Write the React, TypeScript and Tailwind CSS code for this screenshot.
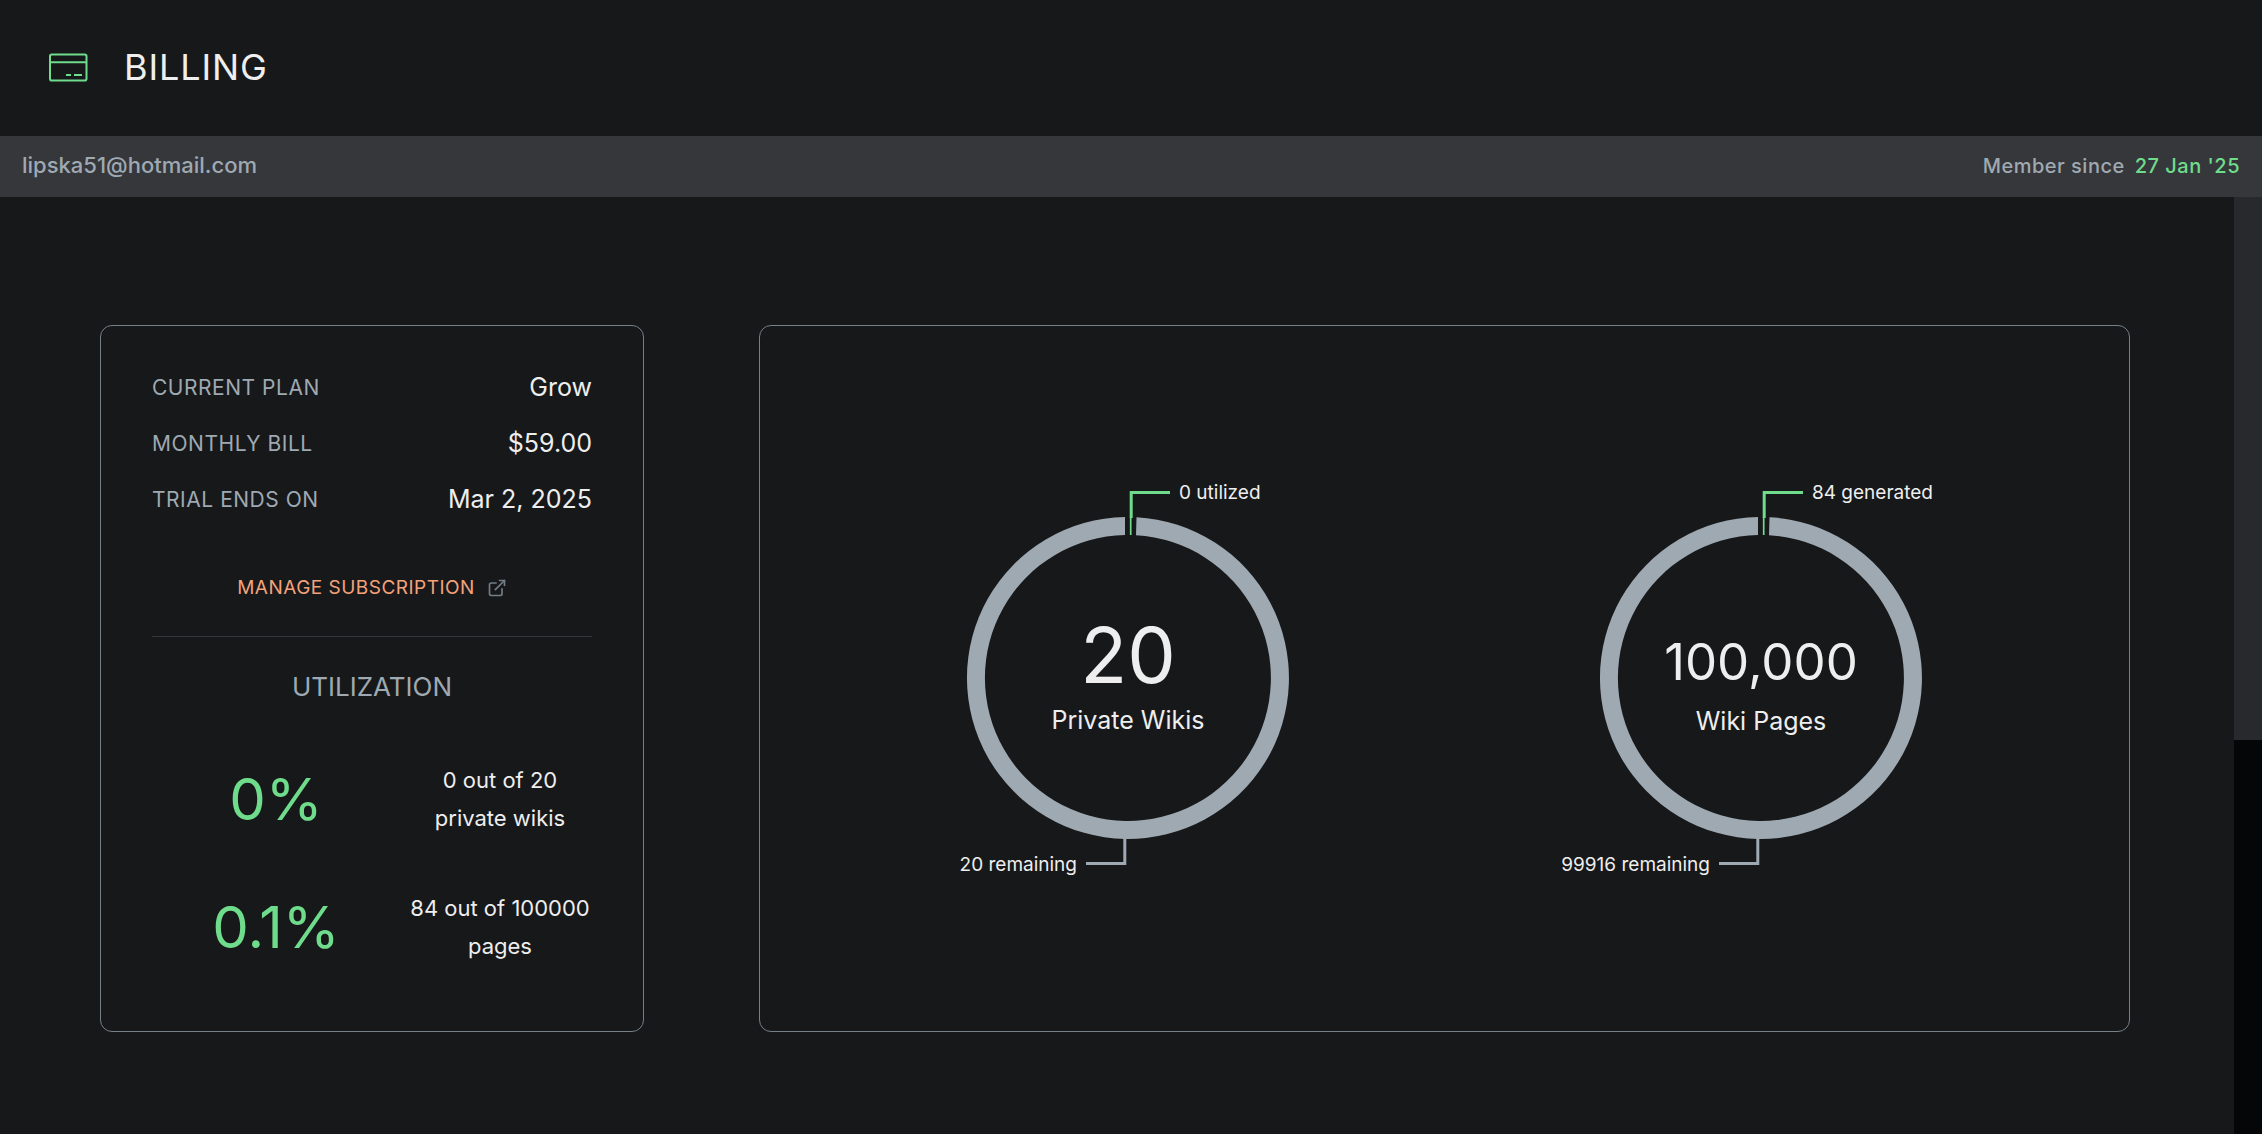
import { ExternalLink } from 'lucide-react';

const planDetails = [
  { label: 'Current plan', value: 'Grow' },
  { label: 'Monthly bill', value: '$59.00' },
  { label: 'Trial ends on', value: 'Mar 2, 2025' },
];

const utilization = [
  { percent: '0%', amount: '0 out of 20', unit: 'private wikis' },
  { percent: '0.1%', amount: '84 out of 100000', unit: 'pages' },
];

type UsageRingProps = {
  total: string;
  label: string;
  used: string;
  remaining: string;
  large?: boolean;
};

function CardIcon() {
  return (
    <svg
      viewBox="0 0 40 30"
      className="w-10 h-[30px] text-[#6fdc8c]"
      fill="none"
      stroke="currentColor"
      strokeWidth="2"
      aria-hidden="true"
    >
      <rect x="2" y="2.5" width="36.5" height="26" rx="1.8" />
      <path d="M2 10.2h36.5" />
      <path d="M18 23h5M26 23h8" />
    </svg>
  );
}

function UsageRing({ total, label, used, remaining, large = false }: UsageRingProps) {
  return (
    <div className="flex flex-1 justify-center">
      <svg
        viewBox="-210 -209 420 420"
        className="w-[420px] h-[420px] overflow-visible"
        role="img"
        aria-label={`${total} ${label}`}
      >
        <path
          d="M8.5 -160.8A161 161 0 1 1 -3 -161V-143A143 143 0 1 0 8 -142.8Z"
          fill="#9fa9b2"
        />
        <path d="M2.7 -161V-143" stroke="#6fdc8c" strokeWidth="1.7" />
        <path d="M3.2 -160V-185.5H42" fill="none" stroke="#6fdc8c" strokeWidth="3" />
        <path d="M-3.2 160V185.5H-42" fill="none" stroke="#9fa9b2" strokeWidth="3" />
        <g className="fill-[#eeeeee]">
          <text x="51" y="-179" className="text-[19px]">{used}</text>
          <text x="-51" y="193" textAnchor="end" className="text-[19px]">{remaining}</text>
          <text
            x="0"
            y={large ? 5 : 2}
            textAnchor="middle"
            className={large ? 'text-[77px]' : 'text-[51px]'}
          >
            {total}
          </text>
          <text x="0" y={large ? 51 : 52} textAnchor="middle" className="text-[25px]">{label}</text>
        </g>
      </svg>
    </div>
  );
}

export default function App() {
  return (
    <div className="flex flex-col h-screen bg-[#17181a] text-[#eeeeee] font-['Inter',sans-serif]">
      <header className="flex items-center gap-9 h-[136px] shrink-0 px-12 pb-0.5">
        <CardIcon />
        <h1 className="text-[36px] tracking-wide">BILLING</h1>
      </header>

      <div className="flex items-center justify-between h-[61px] shrink-0 px-[22px] pb-0.5 bg-[#36373b] text-[#9fa9b2] font-medium">
        <span className="text-[22px]">lipska51@hotmail.com</span>
        <p className="flex gap-[10px] text-[20px] tracking-wide">
          <span>Member since</span>
          <span className="text-[#6fdc8c]">27 Jan '25</span>
        </p>
      </div>

      <div className="flex flex-1 min-h-0">
        <main className="flex-1 pt-32 pl-[100px] pr-[104px]">
          <div className="flex gap-[115px]">
            <section className="w-[544px] shrink-0 rounded-xl border border-[#768087] px-[51px] pt-[34px] pb-[66px]">
              <dl>
                {planDetails.map((item) => (
                  <div key={item.label} className="flex items-center justify-between h-14">
                    <dt className="text-[21px] tracking-wide uppercase text-[#9fa9b2]">{item.label}</dt>
                    <dd className="text-[25px]">{item.value}</dd>
                  </div>
                ))}
              </dl>

              <a
                href="#manage"
                className="flex items-center justify-center gap-3 mt-11 h-8 text-[19px] tracking-wide uppercase text-[#f4a27a]"
              >
                Manage subscription
                <ExternalLink className="w-5 h-5 text-[#737d85]" strokeWidth={2} />
              </a>

              <hr className="mt-8 border-[#36373b]" />

              <h2 className="mt-[30px] text-center text-[26px] leading-10 text-[#9fa9b2]">UTILIZATION</h2>

              <div className="flex flex-col gap-13 mt-[54px]">
                {utilization.map((item) => (
                  <div key={item.unit} className="flex items-center gap-2">
                    <p className="flex-1 text-center text-[58px] leading-[76px] text-[#6fdc8c]">
                      {item.percent}
                    </p>
                    <p className="w-[184px] text-center text-[22px] leading-[38px]">
                      {item.amount}
                      <br />
                      {item.unit}
                    </p>
                  </div>
                ))}
              </div>
            </section>

            <section className="flex flex-1 items-center rounded-xl border border-[#768087] px-[51px]">
              <UsageRing total="20" label="Private Wikis" used="0 utilized" remaining="20 remaining" large />
              <UsageRing
                total="100,000"
                label="Wiki Pages"
                used="84 generated"
                remaining="99916 remaining"
              />
            </section>
          </div>
        </main>

        <div className="w-7 bg-[#050607]" aria-hidden="true">
          <div className="h-[58%] bg-[#28292d]" />
        </div>
      </div>
    </div>
  );
}
